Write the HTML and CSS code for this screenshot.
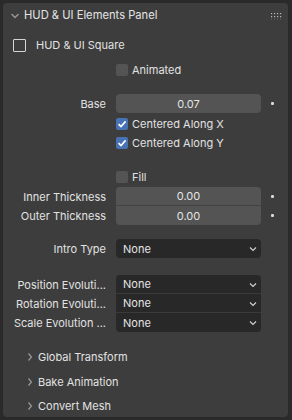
FILE: index.html
```html
<!DOCTYPE html>
<html>
<head>
<meta charset="utf-8">
<link rel="stylesheet" href="styles.css">
</head>
<body>
<div class="panel">
  <div class="header">
    <svg class="hchev" width="10" height="8" viewBox="0 0 10 8"><path d="M1.5 2 L5 5.5 L8.5 2" fill="none" stroke="#9a9a9a" stroke-width="1.3"/></svg>
    <span class="htitle">HUD &amp; UI Elements Panel</span>
    <svg class="grip" width="12" height="8" viewBox="0 0 12 8">
      <g fill="#b8b8b8">
        <rect x="1" y="1" width="1.2" height="1.2"/><rect x="4" y="1" width="1.2" height="1.2"/><rect x="7" y="1" width="1.2" height="1.2"/><rect x="10" y="1" width="1.2" height="1.2"/>
        <rect x="1" y="4" width="1.2" height="1.2"/><rect x="4" y="4" width="1.2" height="1.2"/><rect x="7" y="4" width="1.2" height="1.2"/><rect x="10" y="4" width="1.2" height="1.2"/>
      </g>
      <g fill="#6a6a6a">
        <rect x="1" y="6.5" width="1" height="1"/><rect x="4" y="6.5" width="1" height="1"/><rect x="7" y="6.5" width="1" height="1"/><rect x="10" y="6.5" width="1" height="1"/>
      </g>
    </svg>
  </div>

  <div class="row sq-row">
    <span class="box-outline"></span>
    <span class="sq-label">HUD &amp; UI Square</span>
  </div>

  <div class="row prop r-anim">
    <span class="lbl"></span>
    <div class="val"><span class="cb"></span><span class="cbt">Animated</span></div>
  </div>

  <div class="row prop r-base">
    <span class="lbl">Base</span>
    <div class="val"><div class="field single">0.07</div></div>
    <span class="dot"></span>
  </div>

  <div class="row prop r-cx">
    <span class="lbl"></span>
    <div class="val"><span class="cb on"><svg width="12" height="12" viewBox="0 0 12 12"><path d="M2.6 6.2 L5 8.5 L9.6 3.4" fill="none" stroke="#fff" stroke-width="1.7"/></svg></span><span class="cbt">Centered Along X</span></div>
  </div>

  <div class="row prop r-cy">
    <span class="lbl"></span>
    <div class="val"><span class="cb on"><svg width="12" height="12" viewBox="0 0 12 12"><path d="M2.6 6.2 L5 8.5 L9.6 3.4" fill="none" stroke="#fff" stroke-width="1.7"/></svg></span><span class="cbt">Centered Along Y</span></div>
  </div>

  <div class="row prop r-fill">
    <span class="lbl"></span>
    <div class="val"><span class="cb"></span><span class="cbt">Fill</span></div>
  </div>

  <div class="row prop r-inner">
    <span class="lbl">Inner Thickness</span>
    <div class="val"><div class="field top">0.00</div></div>
    <span class="dot"></span>
  </div>

  <div class="row prop r-outer">
    <span class="lbl">Outer Thickness</span>
    <div class="val"><div class="field bottom">0.00</div></div>
    <span class="dot"></span>
  </div>

  <div class="row prop r-intro">
    <span class="lbl">Intro Type</span>
    <div class="val"><div class="dd single">None<svg class="ddc" width="8" height="6" viewBox="0 0 8 6"><path d="M1 1.5 L4 4.5 L7 1.5" fill="none" stroke="#d0d0d0" stroke-width="1.2"/></svg></div></div>
  </div>

  <div class="row prop r-pos">
    <span class="lbl">Position Evoluti...</span>
    <div class="val"><div class="dd top">None<svg class="ddc" width="8" height="6" viewBox="0 0 8 6"><path d="M1 1.5 L4 4.5 L7 1.5" fill="none" stroke="#d0d0d0" stroke-width="1.2"/></svg></div></div>
  </div>

  <div class="row prop r-rot">
    <span class="lbl">Rotation Evoluti...</span>
    <div class="val"><div class="dd mid">None<svg class="ddc" width="8" height="6" viewBox="0 0 8 6"><path d="M1 1.5 L4 4.5 L7 1.5" fill="none" stroke="#d0d0d0" stroke-width="1.2"/></svg></div></div>
  </div>

  <div class="row prop r-scale">
    <span class="lbl">Scale Evolution ...</span>
    <div class="val"><div class="dd bottom">None<svg class="ddc" width="8" height="6" viewBox="0 0 8 6"><path d="M1 1.5 L4 4.5 L7 1.5" fill="none" stroke="#d0d0d0" stroke-width="1.2"/></svg></div></div>
  </div>

  <div class="row sub r-gt">
    <svg class="schev" width="6" height="10" viewBox="0 0 6 10"><path d="M1.5 1.5 L4.5 5 L1.5 8.5" fill="none" stroke="#9a9a9a" stroke-width="1.2"/></svg>
    <span>Global Transform</span>
  </div>
  <div class="row sub r-bake">
    <svg class="schev" width="6" height="10" viewBox="0 0 6 10"><path d="M1.5 1.5 L4.5 5 L1.5 8.5" fill="none" stroke="#9a9a9a" stroke-width="1.2"/></svg>
    <span>Bake Animation</span>
  </div>
  <div class="row sub r-conv">
    <svg class="schev" width="6" height="10" viewBox="0 0 6 10"><path d="M1.5 1.5 L4.5 5 L1.5 8.5" fill="none" stroke="#9a9a9a" stroke-width="1.2"/></svg>
    <span>Convert Mesh</span>
  </div>
</div>
</body>
</html>
```

FILE: styles.css
```css
* { box-sizing: border-box; }
html, body {
  margin: 0;
  padding: 0;
  background: #2a2a2a;
  width: 292px;
  height: 420px;
  overflow: hidden;
}
body {
  padding: 3px 4px 3px 3px;
  font-family: "Inter", "DejaVu Sans", sans-serif;
  font-size: 11px;
  color: #e2e2e2;
}
.panel {
  background: #3d3d3d;
  border-radius: 4px;
  height: 414px;
  display: flex;
  flex-direction: column;
}
.header {
  height: 24px;
  display: flex;
  align-items: center;
  padding-left: 7px;
  padding-right: 6px;
}
.hchev { margin-right: 4px; margin-top: 1px; }
.htitle { font-size: 11.2px; color: #e4e4e4; flex: 1; }
.grip { margin-top: 1px; }

.row {
  display: flex;
  align-items: center;
  height: 19px;
}
.sq-row { height: 20px; margin-top: 8px; padding-left: 10px; }
.box-outline {
  width: 13px; height: 13px;
  border: 1px solid #d6d6d6;
  border-radius: 1px;
  margin-right: 10px;
}
.sq-label { font-size: 11px; }

.prop .lbl {
  width: 103px;
  text-align: right;
  white-space: nowrap;
  padding-right: 0;
}
.prop .val {
  margin-left: 10px;
  width: 145px;
  height: 100%;
  display: flex;
  align-items: center;
}
.dot {
  width: 3px; height: 3px;
  background: #d8d8d8;
  border-radius: 1px;
  margin-left: 10px;
}
.cb {
  width: 12px; height: 12px;
  background: #545454;
  border-radius: 2px;
  display: flex;
  align-items: center;
  justify-content: center;
  margin-right: 4px;
}
.cb.on { background: #4772b3; }
.cbt { white-space: nowrap; }

.field {
  width: 100%;
  height: 100%;
  background: #545454;
  display: flex;
  align-items: center;
  justify-content: center;
  color: #e4e4e4;
}
.dd {
  width: 100%;
  height: 100%;
  background: #282828;
  display: flex;
  align-items: center;
  padding-left: 7px;
  position: relative;
  color: #e4e4e4;
}
.ddc { position: absolute; right: 4px; top: 7px; }
.single { border-radius: 4px; }
.top { border-radius: 4px 4px 0 0; border-bottom: 1px solid #3a3a3a; }
.mid { border-bottom: 1px solid #3a3a3a; }
.bottom { border-radius: 0 0 4px 4px; }
.field.top { border-bottom-color: #434343; }

.r-anim { height: 20px; margin-top: 5px; }
.r-base { margin-top: 14px; }
.r-cx { margin-top: 1px; }
.r-cy { margin-top: 0; }
.r-fill { height: 20px; margin-top: 15px; }
.r-inner { margin-top: 0; }
.r-outer { margin-top: 0; }
.r-intro { margin-top: 14px; }
.r-pos { margin-top: 17px; }
.r-rot { margin-top: 0; }
.r-scale { margin-top: 0; }

.sub {
  height: 20px;
  padding-left: 24px;
  font-size: 11px;
}
.schev { margin-right: 5px; }
.r-gt { margin-top: 15px; }
.r-bake { margin-top: 5px; }
.r-conv { margin-top: 4px; }
```
